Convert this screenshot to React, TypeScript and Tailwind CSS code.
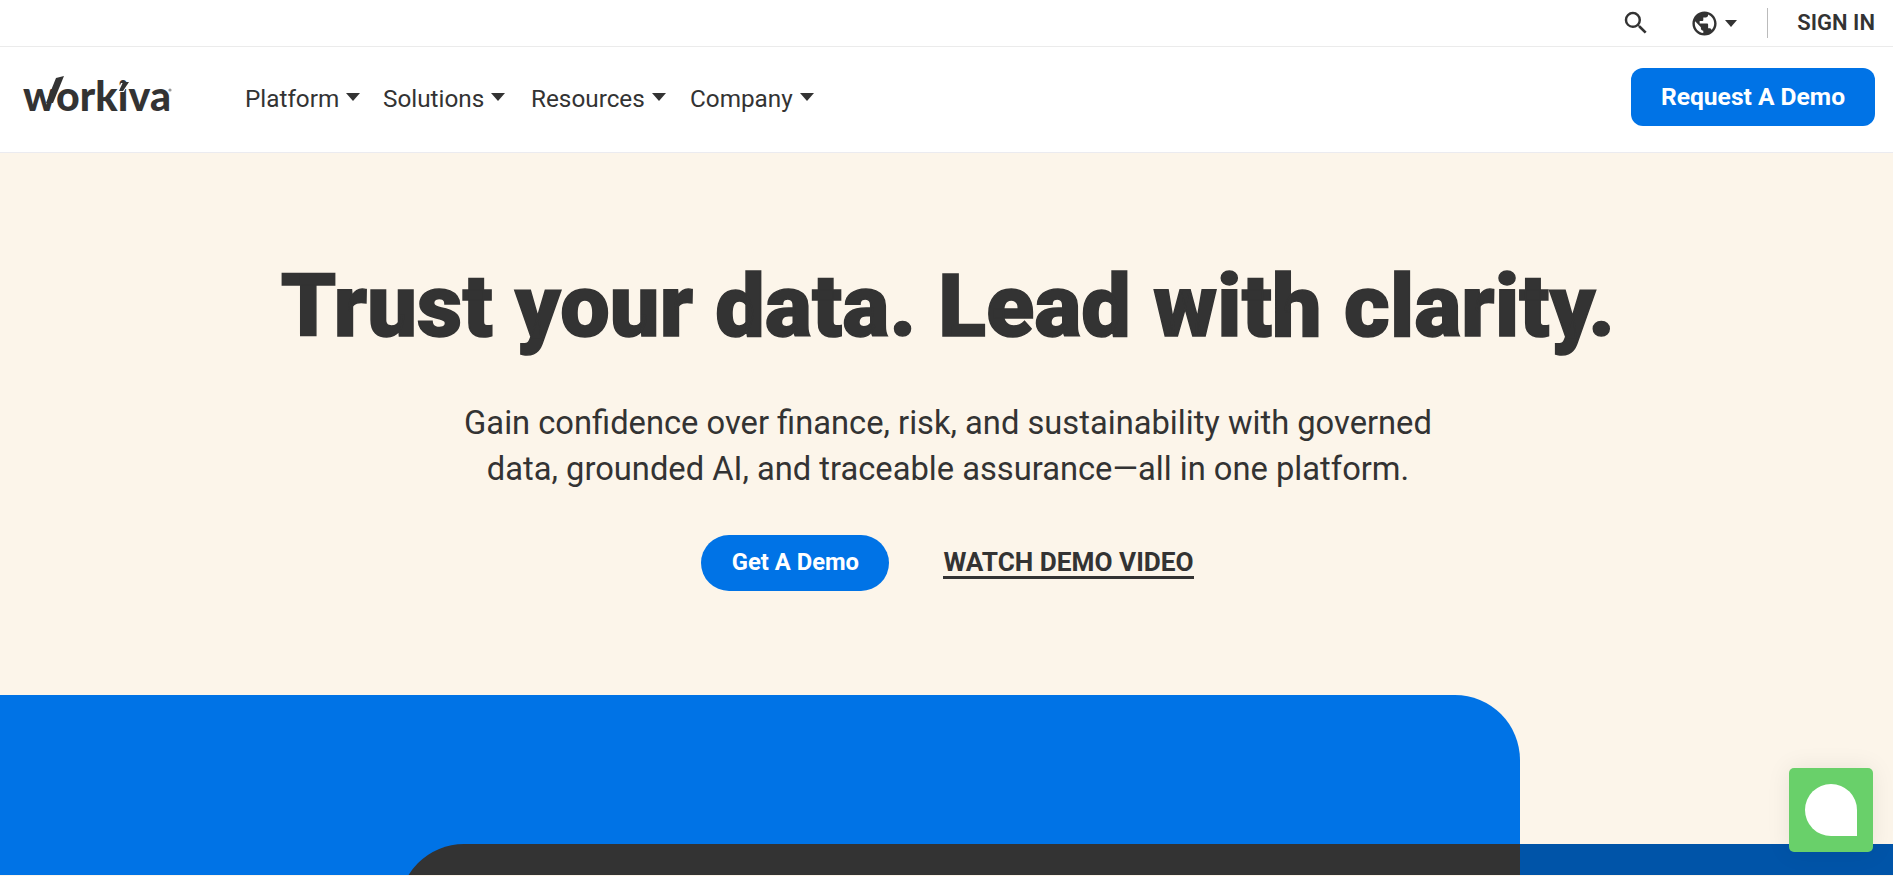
import { MdSearch, MdPublic } from "react-icons/md";

function Caret() {
  return <span className="ml-[7px] mt-[-4px] h-0 w-0 border-x-[7px] border-t-[8px] border-x-transparent border-t-[#333]" />;
}

function NavItem({ label, className }: { label: string; className: string }) {
  return (
    <a className={`flex items-center ${className}`}>
      <span>{label}</span>
      <Caret />
    </a>
  );
}

function Logo() {
  return (
    <a className="relative mt-[-9px] ml-[15px] h-[60px] w-[230px] pt-px pl-[8px] font-['Lato',sans-serif] text-[41px] leading-[60px] font-black tracking-[0.1px]">
      workiva
      <svg className="absolute top-0 left-0" width="170" height="60" viewBox="0 0 170 60">
        <polygon points="41,13 49,11 38,38 31,38" fill="#333" />
        <polygon points="106,18 113,18 109,27 102,27" fill="#fff" />
        <polygon points="108,17 114,17 108,26 104,26" fill="#333" />
        <circle cx="155" cy="25" r="1.6" fill="#999" />
      </svg>
    </a>
  );
}

export default function App() {
  return (
    <div className="relative flex h-[876px] flex-col overflow-hidden bg-white font-['Roboto',sans-serif] text-[#333]">
      <div className="flex h-[47px] shrink-0 items-center justify-end border-b border-[#ebebeb] pr-[18px]">
        <MdSearch className="mr-[39px] text-[30px]" />
        <MdPublic className="text-[29px]" />
        <span className="ml-[6px] mr-[30px] h-0 w-0 border-x-[6px] border-t-[7px] border-x-transparent border-t-[#333]" />
        <span className="mr-[29px] h-[30px] w-px bg-[#bbb]" />
        <span className="text-[22px] font-semibold leading-none">SIGN IN</span>
      </div>

      <header className="flex h-[106px] shrink-0 items-center border-b border-[#ebebf0]">
        <Logo />
        <nav className="flex text-[24.3px] leading-none">
          <NavItem label="Platform" className="w-[138px]" />
          <NavItem label="Solutions" className="w-[148px]" />
          <NavItem label="Resources" className="w-[159px]" />
          <NavItem label="Company" className="w-[130px]" />
        </nav>
        <a className="mt-[-5px] mr-[18px] ml-auto flex h-[58px] w-[244px] items-center justify-center rounded-[12px] bg-[#0073e6] text-[24.6px] font-bold text-white">
          Request A Demo
        </a>
      </header>

      <main className="flex min-h-0 flex-1 flex-col overflow-hidden bg-[#fcf5ea]">
        <section className="flex h-[542px] shrink-0 flex-col items-center pt-[93px] pl-[3px]">
          <h1 className="text-[88px] leading-[120px] font-black tracking-[0.2px] [-webkit-text-stroke:1.5px_#333]">Trust your data. Lead with clarity.</h1>
          <p className="mt-[34px] text-center text-[32.7px] leading-[46px]">
            Gain confidence over finance, risk, and sustainability with governed
            <br />
            data, grounded AI, and traceable assurance—all in one platform.
          </p>
          <div className="mt-[43px] ml-[-1px] flex items-center">
            <a className="flex h-[56px] w-[188px] items-center justify-center rounded-full bg-[#0073e6] text-[23.8px] font-bold text-white">
              Get A Demo
            </a>
            <a className="ml-[54px] border-b-[3px] border-[#333] text-[26.2px] leading-[28px] font-bold">WATCH DEMO VIDEO</a>
          </div>
        </section>

        <div className="flex h-[180px] shrink-0 items-end">
          <div className="h-[180px] w-[1520px] overflow-hidden rounded-tr-[65px] bg-[#0073e6] pt-[149px]">
            <div className="ml-[399px] h-[96px] rounded-tl-[65px] bg-[#333]" />
          </div>
          <div className="h-[31px] flex-1 bg-[#0054a8]" />
        </div>
      </main>

      <div className="absolute top-[768px] left-[1789px] flex h-[84px] w-[84px] items-center justify-center rounded-[5px] bg-[#69d06a] shadow-[0_0_24px_rgba(0,0,0,0.08)]">
        <div className="h-[52px] w-[52px] rounded-full rounded-br-none bg-white" />
      </div>
    </div>
  );
}
